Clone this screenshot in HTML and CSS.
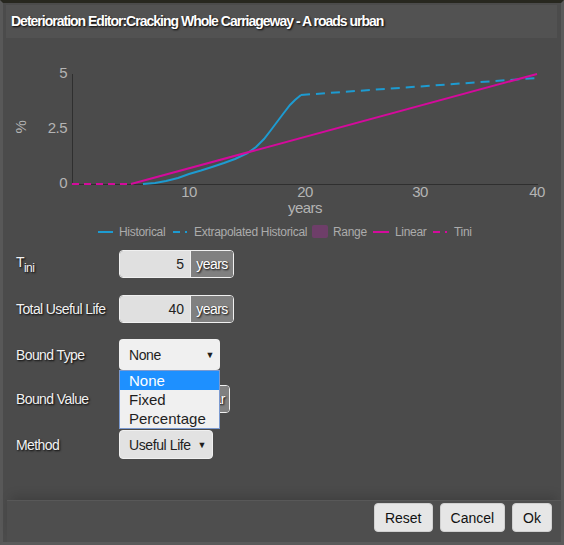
FILE: index.html
```html
<!DOCTYPE html>
<html>
<head>
<meta charset="utf-8">
<link rel="stylesheet" href="styles.css">
</head>
<body>
<div class="dialog">
  <div class="titlebar">Deterioration Editor:Cracking Whole Carriageway - A roads urban</div>
  <div class="content">
    <svg class="chart" width="558" height="205" viewBox="3 38 558 205">
      <g class="axis">
        <line x1="72.5" y1="74" x2="72.5" y2="184.5"/>
        <line x1="72" y1="184.5" x2="538" y2="184.5"/>
      </g>
      <g class="ticks">
        <text x="67" y="78" text-anchor="end">5</text>
        <text x="67" y="133" text-anchor="end">2.5</text>
        <text x="67" y="188" text-anchor="end">0</text>
        <text x="189" y="197" text-anchor="middle">10</text>
        <text x="305" y="197" text-anchor="middle">20</text>
        <text x="420" y="197" text-anchor="middle">30</text>
        <text x="537" y="197" text-anchor="middle">40</text>
        <text x="305" y="213" text-anchor="middle">years</text>
        <text x="0" y="0" text-anchor="middle" transform="translate(26 127) rotate(-90)">%</text>
      </g>
      <path class="tini" d="M72,184 L131,184"/>
      <path class="hist" d="M143,184 L155,183 L166,181 L178,178 L189,174 L201,170.5 L212,167 L224,163 L235,159 L247,153.5 L256,147 L264,139 L271,130 L277,122 L283,114 L290,105 L295,100 L301,95"/>
      <path class="extra" d="M301,95 L537,78"/>
      <path class="linear" d="M131,184 L537,74"/>
      <g class="legend">
        <line class="hist" x1="98" y1="232" x2="113" y2="232"/>
        <text x="119" y="236">Historical</text>
        <line class="extra-leg" x1="173" y1="232" x2="189" y2="232"/>
        <text x="194" y="236">Extrapolated Historical</text>
        <rect x="312" y="225" width="16" height="13" rx="2" fill="#6e3e69"/>
        <text x="333" y="236">Range</text>
        <line class="linear" x1="373" y1="232" x2="389" y2="232"/>
        <text x="395" y="236">Linear</text>
        <line class="tini-leg" x1="433" y1="232" x2="449" y2="232"/>
        <text x="454" y="236">Tini</text>
      </g>
    </svg>

    <div class="form">
      <div class="row r1">
        <div class="label">T<sub>ini</sub></div>
        <div class="igroup">
          <div class="ival">5</div>
          <div class="addon">years</div>
        </div>
      </div>
      <div class="row r2">
        <div class="label">Total Useful Life</div>
        <div class="igroup">
          <div class="ival">40</div>
          <div class="addon">years</div>
        </div>
      </div>
      <div class="row r3">
        <div class="label">Bound Type</div>
        <div class="select-wrap">
          <div class="select light"><span>None</span><span class="arrow">&#9660;</span></div>
          <div class="dropdown">
            <div class="opt sel">None</div>
            <div class="opt">Fixed</div>
            <div class="opt">Percentage</div>
          </div>
        </div>
      </div>
      <div class="row r4">
        <div class="label">Bound Value</div>
        <div class="igroup small">
          <div class="ival"></div>
          <div class="addon">/year</div>
        </div>
      </div>
      <div class="row r5">
        <div class="label">Method</div>
        <div class="select dark"><span>Useful Life</span><span class="arrow">&#9660;</span></div>
      </div>
    </div>
  </div>
  <div class="footer">
    <button class="btn">Reset</button>
    <button class="btn">Cancel</button>
    <button class="btn">Ok</button>
  </div>
</div>
</body>
</html>
```

FILE: styles.css
```css
html, body {
  margin: 0;
  padding: 0;
  width: 564px;
  height: 545px;
  overflow: hidden;
  background: #4b4b4b;
  font-family: "Liberation Sans", Arial, sans-serif;
}
.dialog {
  box-sizing: border-box;
  width: 564px;
  height: 545px;
  border-top: 3px solid #27271f;
  border-left: 3px solid #585858;
  border-right: 3px solid #5a5a5a;
  border-bottom: 3px solid #5a5a5a;
  background: #4b4b4b;
  display: flex;
  flex-direction: column;
}
.titlebar {
  margin: 2px 4px 0 3px;
  height: 33px;
  background: #525252;
  color: #fff;
  font-weight: bold;
  font-size: 14px;
  letter-spacing: -1px;
  line-height: 33px;
  padding-left: 5px;
  text-shadow: 1px 1px 2px #000;
}
.content {
  flex: 1;
  position: relative;
}
.chart {
  display: block;
}
.axis line {
  stroke: #2f2f2f;
  stroke-width: 1;
}
.ticks text {
  fill: #b4b4b4;
  font-size: 15px;
  font-family: "Liberation Sans", Arial, sans-serif;
  letter-spacing: -0.5px;
}
.legend text {
  fill: #acacac;
  font-size: 12px;
  letter-spacing: -0.3px;
}
.hist {
  fill: none;
  stroke: #1d9bd1;
  stroke-width: 2;
}
.extra {
  fill: none;
  stroke: #1d9bd1;
  stroke-width: 2;
  stroke-dasharray: 9 6;
}
.extra-leg {
  stroke: #1d9bd1;
  stroke-width: 2;
  stroke-dasharray: 7 5 2 5;
}
.linear {
  fill: none;
  stroke: #d40a9c;
  stroke-width: 2;
}
.tini {
  fill: none;
  stroke: #d40a9c;
  stroke-width: 2;
  stroke-dasharray: 7 5;
}
.tini-leg {
  stroke: #d40a9c;
  stroke-width: 2;
  stroke-dasharray: 7 5 2 5;
}
.form {
  padding: 7px 0 0 13px;
  display: flex;
  flex-direction: column;
}
.row {
  display: flex;
  align-items: center;
  height: 28px;
}
.r2 { margin-top: 17px; }
.r3 { margin-top: 16px; height: 31px; }
.r4 { margin-top: 15px; }
.r5 { margin-top: 17px; height: 29px; }
.label {
  width: 103px;
  color: #f2f2f2;
  font-size: 14px;
  letter-spacing: -0.6px;
  text-shadow: 1px 1px 2px #000;
}
.label sub {
  font-size: 12px;
  vertical-align: -5px;
  letter-spacing: -0.5px;
}
.igroup {
  box-sizing: border-box;
  width: 115px;
  height: 28px;
  display: flex;
  border: 1px solid #f0f0f0;
  border-radius: 4px;
  overflow: hidden;
}
.ival {
  flex: 1;
  background: #e0e0e0;
  color: #222;
  font-size: 14px;
  text-align: right;
  padding-right: 6px;
  line-height: 26px;
}
.addon {
  width: 42px;
  background: #808080;
  color: #fff;
  font-size: 14px;
  letter-spacing: -0.5px;
  line-height: 26px;
  text-align: center;
  text-shadow: 1px 1px 2px #000;
  border-left: 1px solid #f0f0f0;
}
.igroup.small { width: 111px; }
.igroup.small .addon {
  width: 50px;
  text-align: right;
  padding-right: 4px;
  box-sizing: border-box;
}
.select-wrap {
  position: relative;
}
.select {
  box-sizing: border-box;
  height: 31px;
  border-radius: 4px;
  display: flex;
  align-items: center;
  justify-content: space-between;
  padding: 0 6px 0 10px;
  font-size: 14px;
  color: #1e1e1e;
  letter-spacing: -0.4px;
}
.select.light {
  width: 101px;
  background: #f0f0f0;
}
.select.dark {
  width: 94px;
  height: 29px;
  background: #e2e2e2;
  border: 1px solid #f0f0f0;
  padding-left: 9px;
}
.arrow {
  font-size: 9px;
}
.dropdown {
  position: absolute;
  left: 0;
  top: 31px;
  box-sizing: border-box;
  width: 101px;
  background: #f0f0f0;
  border: 1px solid #7b9ad0;
  z-index: 2;
}
.opt {
  height: 19px;
  line-height: 19px;
  font-size: 15px;
  padding-left: 9px;
  color: #1e1e1e;
}
.opt.sel {
  background: #1e90ff;
  color: #fff;
}
.footer {
  height: 42px;
  margin-left: 4px;
  background: #4e4e4e;
  border-top: 1px solid #585858;
  box-shadow: 0 -8px 10px -4px rgba(0,0,0,0.15);
  display: flex;
  justify-content: flex-end;
  align-items: flex-start;
  gap: 7px;
  padding: 2px 9px 0 0;
  box-sizing: border-box;
}
.btn {
  height: 29px;
  padding: 0 10px;
  background: #e6e6e6;
  border: 1px solid #d0d0d0;
  border-radius: 4px;
  font-family: "Liberation Sans", Arial, sans-serif;
  font-size: 14px;
  color: #111;
}
```
